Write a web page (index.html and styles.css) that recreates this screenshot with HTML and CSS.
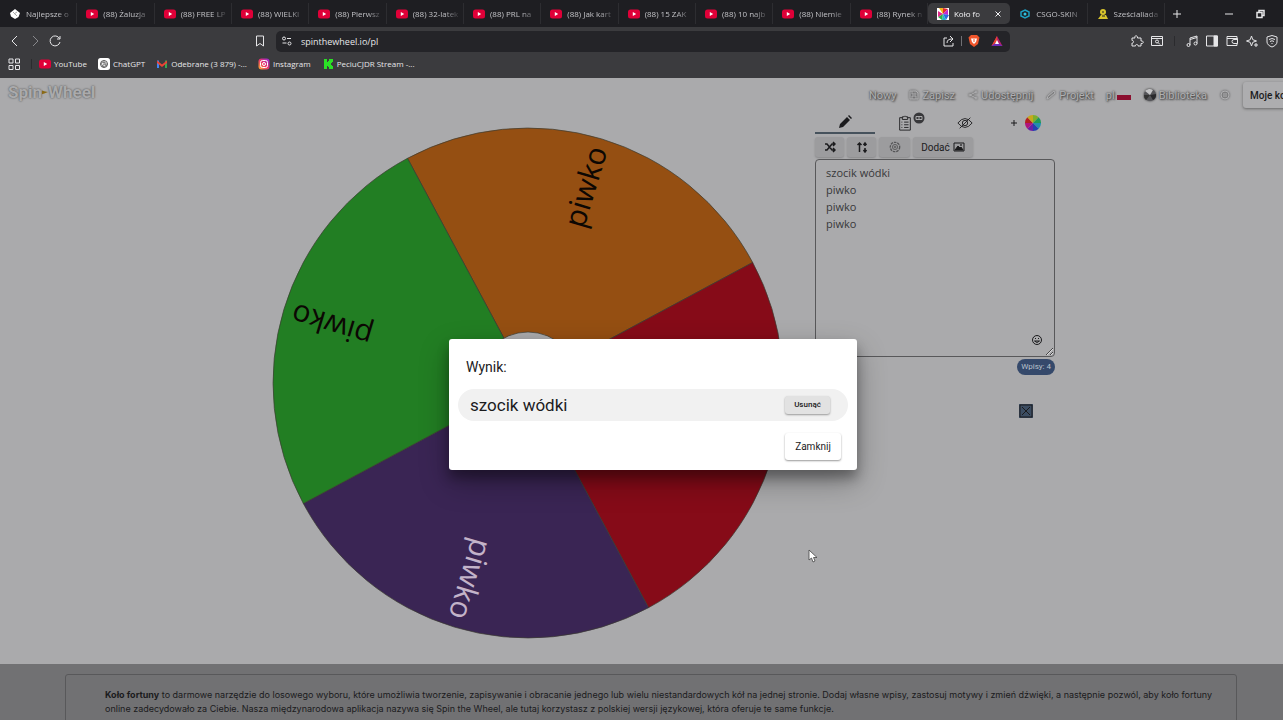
FILE: index.html
```
<!DOCTYPE html>
<html lang="pl">
<head>
    <meta charset="UTF-8">
    <meta name="viewport" content="width=device-width, initial-scale=1.0">
    <title>Koło fortuny</title>
    <link rel="stylesheet" href="styles.css">
</head>
<body>
    <svg class="symbols" aria-hidden="true">
        <symbol id="yt" viewBox="0 0 12 12">
            <rect x="0" y="1.5" width="12" height="9" rx="2.5" fill="#e00038"/>
            <path d="M4.8 4v4l3.4-2z" fill="#fff"/>
        </symbol>
        <symbol id="color-wheel" viewBox="0 0 16 16">
            <path d="M8 8V0a8 8 0 0 1 5.7 2.3z" fill="#7fae2b"/>
            <path d="M8 8l5.7-5.7A8 8 0 0 1 16 8z" fill="#1f9a55"/>
            <path d="M8 8h8a8 8 0 0 1-2.3 5.7z" fill="#1f8fae"/>
            <path d="M8 8l5.7 5.7A8 8 0 0 1 8 16z" fill="#2342b0"/>
            <path d="M8 8v8a8 8 0 0 1-5.7-2.3z" fill="#6a1fa5"/>
            <path d="M8 8l-5.7 5.7A8 8 0 0 1 0 8z" fill="#b0147c"/>
            <path d="M8 8H0a8 8 0 0 1 2.3-5.7z" fill="#b32020"/>
            <path d="M8 8L2.3 2.3A8 8 0 0 1 8 0z" fill="#c6a81b"/>
        </symbol>
    </svg>

    <div class="shell">
        <header class="browser">
            <div class="tab-strip">
                <div class="tabs">
                    <div class="tab"><svg viewBox="0 0 12 12"><path d="M6 1l5 4-1.500 4L6 11 2 8.500 1 5z" fill="#fff"/><path d="M4 4l4 4M8 4L5 6" stroke="#aaa"/></svg><span>Najlepsze o</span></div>
                    <div class="tab"><svg><use href="#yt"/></svg><span>(88) Żaluzja</span></div>
                    <div class="tab"><svg><use href="#yt"/></svg><span>(88) FREE LP</span></div>
                    <div class="tab"><svg><use href="#yt"/></svg><span>(88) WIELKI</span></div>
                    <div class="tab"><svg><use href="#yt"/></svg><span>(88) Pierwsz</span></div>
                    <div class="tab"><svg><use href="#yt"/></svg><span>(88) 32-latek</span></div>
                    <div class="tab"><svg><use href="#yt"/></svg><span>(88) PRL na</span></div>
                    <div class="tab"><svg><use href="#yt"/></svg><span>(88) Jak kart</span></div>
                    <div class="tab"><svg><use href="#yt"/></svg><span>(88) 15 ZAK</span></div>
                    <div class="tab"><svg><use href="#yt"/></svg><span>(88) 10 najb</span></div>
                    <div class="tab"><svg><use href="#yt"/></svg><span>(88) Niemie</span></div>
                    <div class="tab"><svg><use href="#yt"/></svg><span>(88) Rynek n</span></div>
                    <div class="tab active">
                        <svg viewBox="0 0 12 12"><path d="M0 0h12v12H0z" fill="#fff"/><path d="M6 6L2 0h4z" fill="#f0b51a"/><path d="M6 6V0l5 1z" fill="#e02b2b"/><path d="M6 6l5-5v6z" fill="#c22bd0"/><path d="M6 6l6 1-3 5z" fill="#2b6be0"/><path d="M6 6l3 6H5z" fill="#25b7c9"/><path d="M6 6l-1 6-4-3z" fill="#2bb04a"/><path d="M6 6L1 9V3z" fill="#e02b8c"/></svg>
                        <span>Koło fo</span>
                        <button class="tab-close" aria-label="Zamknij kartę"><svg viewBox="0 0 8 8"><path d="M1.500 1.500l5 5M6.500 1.500l-5 5"/></svg></button>
                    </div>
                    <div class="tab"><svg viewBox="0 0 12 12"><path d="M6 2l4 2v4l-4 2-4-2V4z" fill="none" stroke="#1f9fc0" stroke-width="1.500"/><circle cx="6" cy="6" r="1.500" fill="#2fc3e0"/></svg><span>CSGO-SKIN</span></div>
                    <div class="tab"><svg viewBox="0 0 12 12"><circle cx="6" cy="4" r="3" fill="#d8c42c"/><path d="M1 11l3-4h5l2 4z" fill="#d8c42c"/><path d="M5 4h2M5 8h3" stroke="#1e1e22"/></svg><span>Sześcialiada</span></div>
                </div>
                <button class="new-tab" aria-label="Nowa karta"><svg viewBox="0 0 12 12"><path d="M6 2v8M2 6h8"/></svg></button>
                <div class="window-buttons">
                    <button aria-label="Minimalizuj"><svg viewBox="0 0 12 12"><path d="M2 6h8"/></svg></button>
                    <button aria-label="Przywróć"><svg viewBox="0 0 12 12"><path d="M3 4.500h5v5H3zM5 4V2.500h5v5H8.500" stroke-width="1.500"/></svg></button>
                    <button aria-label="Zamknij"><svg viewBox="0 0 12 12"><path d="M3 3l6 6M9 3l-6 6"/></svg></button>
                </div>
            </div>

            <div class="toolbar">
                <div class="nav-buttons">
                    <button aria-label="Wstecz"><svg viewBox="0 0 14 14"><path d="M9 2L4 7l5 5"/></svg></button>
                    <button class="dim" aria-label="Dalej"><svg viewBox="0 0 14 14"><path d="M5 2l5 5-5 5"/></svg></button>
                    <button aria-label="Odśwież"><svg viewBox="0 0 14 14"><path d="M11.500 4.500A5 5 0 1 0 12 8M12 2v3H9"/></svg></button>
                </div>
                <button class="bookmark" aria-label="Dodaj zakładkę"><svg viewBox="0 0 14 14"><path d="M3.500 2h7v10L7 9.500 3.500 12z"/></svg></button>
                <div class="address">
                    <svg viewBox="0 0 14 14"><circle cx="4" cy="4.500" r="1.500"/><path d="M7 4.500h4M2.500 9h4"/><circle cx="9.500" cy="9.500" r="1.500"/></svg>
                    <input type="text" value="spinthewheel.io/pl" aria-label="Adres">
                    <svg viewBox="0 0 14 14"><path d="M5 4H2v8h9V9M5 9c0-3 2-4 5-4M8 2l3 3-3 3"/></svg>
                    <i class="divider"></i>
                    <svg class="brave" viewBox="0 0 14 14"><path d="M4 1h6l2.500 2.500L11 10l-4 3-4-3-1.500-6.500z" fill="#f0552b" stroke="none"/><path d="M4 4.500h6L9 8l-2 2-2-2z" fill="#fff" stroke="none"/><path d="M7 5v3" stroke="#f0552b"/></svg>
                    <svg class="bat" viewBox="0 0 14 14"><path d="M7 2l5.500 10h-11z" fill="#b81e6c" stroke="none"/><path d="M7 2v6l-5.500 4z" fill="#e8452c" stroke="none"/><path d="M1.500 12L7 8l5.500 4z" fill="#6b2bb5" stroke="none"/><path d="M7 6l2 4H5z" fill="#fff" stroke="none"/></svg>
                </div>
                <div class="extensions">
                    <svg viewBox="0 0 14 14"><path d="M2 4h3c-1-3 3-3 2.500 0H11v3c3-.5 3 3 0 2.500V12H8c.5-2-3-2-2.500 0H2V9c2 .5 2-3 0-2.500z"/></svg>
                    <svg viewBox="0 0 14 14"><path d="M1.500 2.500h11v9h-11zM2 4.500h10"/><circle cx="7" cy="7.500" r="1.500"/><path d="M8 8.500l2 2"/></svg>
                    <i class="divider"></i>
                    <svg viewBox="0 0 14 14"><path d="M5 11V4l7-2v7.500M5 5.500l7-2"/><circle cx="3.500" cy="11" r="1.500"/><circle cx="10.500" cy="9.500" r="1.500"/></svg>
                    <svg viewBox="0 0 14 14"><path d="M1.500 2h11v10h-11z"/><path d="M9 2h3.500v10H9z" fill="#e6e6e8"/></svg>
                    <svg viewBox="0 0 14 14"><path d="M12 5V2.500H2v9h10V9M2 4.500h10.500v5H9a2 2 0 0 1 0-4h3.500"/></svg>
                    <svg viewBox="0 0 14 14"><path d="M6.500 2l1.300 3.700L11.500 7 7.800 8.300 6.500 12 5.200 8.300 1.500 7l3.700-1.300zM11 9v4M9 11h4"/></svg>
                    <svg viewBox="0 0 14 14"><path d="M7 1.500L12 3v5c0 2-2 4-5 5-3-1-5-3-5-5V3z"/><path d="M4 5.500q3-2 6 0M5 7.500q2-1.500 4 0M7 9v1"/></svg>
                </div>
            </div>

            <nav class="bookmarks">
                <button aria-label="Grupy kart"><svg viewBox="0 0 12 12"><path d="M1 1h4v4H1zM7.500 1h4v4h-4zM1 7.500h4v4H1zM7.500 7.500h4v4h-4z"/></svg></button>
                <i class="divider"></i>
                <a href="#"><svg><use href="#yt"/></svg>YouTube</a>
                <a href="#"><svg viewBox="0 0 12 12"><rect width="12" height="12" rx="2.500" fill="#fff"/><g fill="none" stroke="#555"><circle cx="6" cy="6" r="3.500"/><path d="M4 4l4 1v3L5 8.500 3.500 6zM6 3v3l3 1.500M6 6L4 9" stroke-width=".7"/></g></svg>ChatGPT</a>
                <a href="#"><svg viewBox="0 0 12 12"><path d="M1 2.500h2v7.500H1z" fill="#4285f4"/><path d="M9 2.500h2v7.500H9z" fill="#34a853"/><path d="M1 2.500l5 4 5-4V5L6 9 1 5z" fill="#ea4335"/></svg>Odebrane (3 879) -...</a>
                <a href="#"><svg viewBox="0 0 12 12"><defs><linearGradient id="ig" x1="0" y1="1" x2="1" y2="0"><stop offset="0" stop-color="#ffb52b"/><stop offset=".5" stop-color="#e8306c"/><stop offset="1" stop-color="#8a2be0"/></linearGradient></defs><rect x=".5" y=".5" width="11" height="11" rx="3" fill="url(#ig)"/><g fill="none" stroke="#fff"><rect x="2.500" y="2.500" width="7" height="7" rx="2"/><circle cx="6" cy="6" r="1.500"/></g></svg>Instagram</a>
                <a href="#"><svg viewBox="0 0 12 12"><path d="M2 1h3v3h1V3h1V1h4v3h-1v1H9v2h1v1h1v3H7V9H6V8H5v3H2z" fill="#2be026"/></svg>PeciuCJDR Stream -...</a>
            </nav>
        </header>

        <div class="page">
            <header class="site-header">
                <a href="#" class="logo">Spin<svg viewBox="0 0 8 6"><path d="M0 1l3 1 5 1-5 2-3 1z" fill="#8a6a16"/></svg>Wheel</a>
                <nav class="site-nav">
                    <a href="#">Nowy</a>
                    <a href="#"><svg viewBox="0 0 12 12"><path d="M2 2h6l2 2v6H2zM4 2v3h4M4 10V7h4v3"/></svg>Zapisz</a>
                    <a href="#"><svg viewBox="0 0 12 12"><path d="M9 3L3 6l6 3"/><circle cx="9" cy="3" r="1"/><circle cx="3" cy="6" r="1"/><circle cx="9" cy="9" r="1"/></svg>Udostępnij</a>
                    <a href="#"><svg viewBox="0 0 12 12"><path d="M2 10l1-3 6-5 1 2-6 5z"/></svg>Projekt</a>
                    <a href="#">pl<i class="flag"></i></a>
                    <a href="#" class="library"><svg class="avatar" viewBox="0 0 14 14"><circle cx="7" cy="7" r="6" fill="#555559"/><path d="M7 7L2 3a6 6 0 0 1 8-1z" fill="#c4c4c6"/><path d="M7 7l6-1a6 6 0 0 1-3 6z" fill="#29292c"/><path d="M7 7L3 12a6 6 0 0 1-2-5z" fill="#333"/></svg>Biblioteka</a>
                    <a href="#" aria-label="Ustawienia"><svg viewBox="0 0 12 12"><circle cx="6" cy="6" r="4"/><path d="M4 5h4M4 7h4"/></svg></a>
                </nav>
                <button class="my-wheels">Moje koła</button>
            </header>

            <main class="content">
                <svg class="wheel" viewBox="0 0 510 510">
                    <g class="slices">
                        <path d="M255 255L134.500 30.300A255 255 0 0 1 479.700 134.500z" fill="#954f12"/>
                        <path d="M255 255L479.700 134.500A255 255 0 0 1 375.500 479.700z" fill="#860b18"/>
                        <path d="M255 255L375.500 479.700A255 255 0 0 1 30.300 375.500z" fill="#3a2554"/>
                        <path d="M255 255L30.300 375.500A255 255 0 0 1 134.500 30.300z" fill="#227e23"/>
                        <circle cx="255" cy="255" r="51" fill="#ababad"/>
                    </g>
                    <g class="labels" text-anchor="end">
                        <text x="501" y="264" transform="rotate(-73.200 255 255)">piwko</text>
                        <text x="501" y="264" transform="rotate(-163.200 255 255)">piwko</text>
                        <text x="501" y="264" transform="rotate(106.800 255 255)" class="light">piwko</text>
                    </g>
                </svg>

                <aside class="panel">
                    <div class="panel-tabs">
                        <button class="selected" aria-label="Wpisy"><svg viewBox="0 0 16 16"><path d="M2 14l1-4 7-7 3 3-7 7zM11 2l1-1 3 3-1 1z" fill="#1b1b1d"/></svg></button>
                        <button aria-label="Wyniki" class="results">
                            <svg viewBox="0 0 16 18"><path d="M5 3H2v14h12V3h-3M5 2h2q1-2 2 0h2v3H5zM7 8h5M7 11h5M7 14h5M4 8h1M4 11h1M4 14h1"/></svg>
                            <svg class="results-badge" viewBox="0 0 12 12"><circle cx="6" cy="6" r="5.500" fill="#38383b" stroke="none"/><path d="M3 4.500h6v3H3zM5 6h2" stroke="#aaaaac"/></svg>
                        </button>
                        <button aria-label="Ukryj"><svg viewBox="0 0 18 16"><path d="M1 8q8-10 16 0-8 10-16 0zM3 14L15 2"/><circle cx="9" cy="8" r="3"/></svg></button>
                        <button aria-label="Dodaj koło" class="add-wheel"><svg class="plus" viewBox="0 0 8 8"><path d="M4 1v6M1 4h6"/></svg><svg><use href="#color-wheel"/></svg></button>
                    </div>
                    <div class="panel-tools">
                        <button aria-label="Tasuj"><svg viewBox="0 0 12 12"><path d="M1 3h2l5 6h3M1 9h2l5-6h3M9 1l2 2-2 2M9 7l2 2-2 2" stroke-width="1.500"/></svg></button>
                        <button aria-label="Sortuj"><svg viewBox="0 0 12 12"><path d="M3.500 11V2M1.500 4l2-2 2 2M9 2v3M9 7v4M7.500 4L9 2l1.500 2M7.500 9L9 11l1.500-2" stroke-width="1.500"/></svg></button>
                        <button class="gear" aria-label="Opcje"><svg viewBox="0 0 14 14"><circle cx="7" cy="7" r="5.500" stroke-width="1.500" stroke-dasharray="3 1"/><circle cx="7" cy="7" r="3"/><circle cx="7" cy="7" r="1"/></svg></button>
                        <button class="add">Dodać<svg viewBox="0 0 12 12"><path d="M1 2h10v8H1z"/><path d="M2 9l3-4 2 2 1-1 2 3z" fill="#1b1b1d"/><circle cx="8" cy="4" r=".5"/></svg></button>
                    </div>
                    <div class="entries">
                        <textarea aria-label="Wpisy" spellcheck="false">szocik wódki
piwko
piwko
piwko</textarea>
                        <button class="emoji" aria-label="Emoji"><svg viewBox="0 0 12 12"><circle cx="6" cy="6" r="4.500"/><path d="M3.500 7q2.500 3 5 0zM4 4.500h1M7 4.500h1"/></svg></button>
                    </div>
                    <span class="count">Wpisy: 4</span>
                    <button class="clear" aria-label="Wyczyść"><svg viewBox="0 0 14 14"><path d="M3 3l8 8M11 3l-8 8M1 1h12v12H1z"/></svg></button>
                </aside>
            </main>

            <footer class="about">
                <div class="about-card">
                    <p><b>Koło fortuny</b> to darmowe narzędzie do losowego wyboru, które umożliwia tworzenie, zapisywanie i obracanie jednego lub wielu niestandardowych kół na jednej stronie. Dodaj własne wpisy, zastosuj motywy i zmień dźwięki, a następnie pozwól, aby koło fortuny online zadecydowało za Ciebie. Nasza międzynarodowa aplikacja nazywa się Spin the Wheel, ale tutaj korzystasz z polskiej wersji językowej, która oferuje te same funkcje.</p>
                </div>
            </footer>

            <div class="overlay">
                <div class="dialog" role="dialog" aria-labelledby="result-title">
                    <h2 id="result-title">Wynik:</h2>
                    <div class="result">
                        <span>szocik wódki</span>
                        <button class="remove">Usunąć</button>
                    </div>
                    <button class="close">Zamknij</button>
                </div>
            </div>

            <svg class="cursor" viewBox="0 0 10 14"><path d="M1 1v10l2.500-2 1.500 4 2-1-1.500-3.500H9z" fill="#fff" stroke="#444" stroke-width=".8"/></svg>
        </div>
    </div>
</body>
</html>
```
FILE: styles.css
```
* {
    margin: 0;
    padding: 0;
    box-sizing: border-box;
}

body {
    font-family: Roboto, sans-serif;
    background: #aaaaac;
    color: #1b1b1d;
    overflow: hidden;
}

/* the window runs a little past the right edge of the screen */
.shell {
    width: calc(100% + 23px);
    height: 100vh;
    display: flex;
    flex-direction: column;
}

button {
    border: none;
    background: none;
    font-family: inherit;
    color: inherit;
    display: flex;
    align-items: center;
    justify-content: center;
    cursor: pointer;
}

a {
    color: inherit;
    text-decoration: none;
}

svg {
    fill: none;
    stroke: currentColor;
    flex-shrink: 0;
}

.symbols {
    position: absolute;
    width: 0;
    height: 0;
}

symbol,
.tab > svg,
.bookmarks a svg {
    stroke: none;
}

/* Browser */
.browser {
    background: #3b3b3e;
    color: #e6e6e8;
    font-family: "Open Sans", sans-serif;
    font-size: 8px;
    font-weight: 500;
}

.tab-strip {
    height: 27px;
    background: #1e1e22;
    display: flex;
    align-items: center;
}

.tabs {
    flex: 1;
    min-width: 0;
    display: flex;
    align-items: center;
}

.tab {
    flex: 1 1 0;
    min-width: 0;
    height: 21px;
    padding: 0 2px 0 9px;
    display: flex;
    align-items: center;
    gap: 5px;
    color: #c2c2c6;
    border-right: 1px solid #2d2d31;
}

.tab > svg {
    width: 12px;
    height: 12px;
}

.tab span {
    flex: 1;
    min-width: 0;
    overflow: hidden;
    white-space: nowrap;
    mask-image: linear-gradient(to right, #000 65%, transparent);
}

.tab.active {
    padding: 0 8px 0 9px;
    border: none;
    border-radius: 5px;
    background: #3b3b3e;
    color: #f2f2f4;
}

.tab-close svg {
    width: 8px;
    height: 8px;
}

.new-tab {
    width: 24px;
}

.new-tab svg,
.window-buttons svg {
    width: 12px;
    height: 12px;
}

.window-buttons {
    display: flex;
    margin-left: 24px;
}

.window-buttons button {
    width: 31px;
}

.toolbar {
    height: 28px;
    display: flex;
    align-items: center;
}

.toolbar svg {
    width: 14px;
    height: 14px;
}

.nav-buttons {
    display: flex;
    gap: 6px;
    padding-left: 8px;
    width: 253px;
}

.dim {
    color: #88888c;
}

.address {
    flex: 1;
    height: 21px;
    margin-left: 9px;
    padding: 0 6px 0 4px;
    border-radius: 5px;
    background: #242428;
    display: flex;
    align-items: center;
    gap: 5px;
}

.address input {
    flex: 1;
    padding-left: 2px;
    border: none;
    outline: none;
    background: none;
    color: #e6e6e8;
    font: inherit;
    font-size: 9px;
}

.address .bat {
    margin-left: 4px;
}

.divider {
    width: 1px;
    height: 10px;
    background: #707074;
}

.extensions {
    width: 296px;
    padding-right: 27px;
    display: flex;
    justify-content: flex-end;
    align-items: center;
    gap: 6px;
}

.extensions .divider,
.bookmarks .divider {
    background: #2b2b2e;
}

.extensions .divider {
    margin: 0 4px;
}

.bookmarks {
    height: 23px;
    padding: 0 8px 6px;
    display: flex;
    align-items: center;
    gap: 11px;
}

.bookmarks svg {
    width: 12px;
    height: 12px;
}

.bookmarks .divider {
    margin-right: -4px;
}

.bookmarks a {
    display: flex;
    align-items: center;
    gap: 3px;
}

/* Page */
.page {
    flex: 1;
    min-height: 0;
    position: relative;
    display: flex;
    flex-direction: column;
}

.site-header {
    height: 34px;
    display: flex;
    align-items: center;
    justify-content: flex-end;
}

.logo {
    margin: 0 auto 6px 8px;
    font-size: 17px;
    font-weight: 700;
    color: #aaaaac;
    text-shadow: 0 0 2px #444;
    display: flex;
    align-items: center;
}

.logo svg {
    width: 6px;
    height: 6px;
    stroke: none;
}

.site-nav {
    display: flex;
    align-items: center;
    gap: 12px;
    font-size: 11px;
    color: #b0b0b2;
    text-shadow: 0 0 2px #333, 1px 1px 2px #444;
}

.site-nav a {
    display: flex;
    align-items: center;
    gap: 2px;
}

.site-nav svg {
    width: 12px;
    height: 12px;
    filter: drop-shadow(0 0 1px #333);
}

.site-nav .avatar {
    width: 14px;
    height: 14px;
    stroke: none;
}

.flag {
    width: 14px;
    height: 10px;
    background: linear-gradient(#ababad 50%, #8b0f2f 50%);
}

.my-wheels {
    width: 63px;
    height: 26px;
    margin-left: 12px;
    padding-left: 7px;
    border-radius: 3px;
    background: #adadaf;
    box-shadow: 0 1px 3px #666;
    font-size: 10px;
    font-weight: 500;
    justify-content: flex-start;
    white-space: nowrap;
}

.content {
    flex: 1;
    padding-left: 22px;
    display: flex;
    justify-content: center;
    gap: 32px;
}

.wheel {
    width: 510px;
    height: 510px;
    margin-top: 16px;
    overflow: visible;
}

.slices {
    stroke: #3a3a30;
    stroke-opacity: 0.7;
}

.labels {
    font-family: "Open Sans", sans-serif;
    font-size: 30px;
    font-weight: 500;
    fill: #0c0703;
    stroke: none;
}

.labels .light {
    fill: #c3b3c9;
}

.panel {
    width: 240px;
    display: flex;
    flex-direction: column;
}

.panel-tabs {
    display: grid;
    grid-template-columns: repeat(4, 1fr);
    height: 22px;
}

.panel-tabs svg {
    width: 16px;
    height: 16px;
}

.panel-tabs .selected {
    border-bottom: 2px solid #46525c;
}

.panel-tabs .selected svg {
    stroke: none;
}

.results {
    position: relative;
}

.panel-tabs .results-badge {
    position: absolute;
    top: 0;
    right: 10px;
    width: 12px;
    height: 12px;
}

.add-wheel {
    gap: 7px;
}

.panel-tabs .plus {
    width: 8px;
    height: 8px;
}

.panel-tools {
    display: flex;
    gap: 3px;
    padding: 3px 0 2px;
}

.panel-tools button {
    width: 29px;
    height: 20px;
    border-radius: 3px;
    background: #9c9c9e;
    box-shadow: 0 1px 2px #88888a;
}

.panel-tools .gear {
    width: 31px;
    color: #555557;
}

.panel-tools .add {
    width: 60px;
    gap: 3px;
    font-size: 10px;
}

.panel-tools svg {
    width: 12px;
    height: 12px;
}

.entries {
    position: relative;
    height: 198px;
}

.entries textarea {
    width: 100%;
    height: 100%;
    padding: 4px 10px;
    border: 1px solid #58585a;
    border-radius: 4px;
    outline: none;
    background: transparent;
    color: #38383a;
    font-family: "Open Sans", sans-serif;
    font-size: 11px;
    line-height: 17px;
    display: block;
}

.emoji {
    position: absolute;
    right: 12px;
    bottom: 11px;
}

.emoji svg {
    width: 12px;
    height: 12px;
}

.count {
    align-self: flex-end;
    margin-top: 2px;
    padding: 0 4px;
    border-radius: 8px;
    background: #35496b;
    color: #b9c1cc;
    font-size: 8px;
    line-height: 16px;
}

.clear {
    align-self: flex-end;
    margin: 29px 22px 0 0;
    background: #3c4d62;
}

.clear svg {
    width: 14px;
    height: 14px;
}

.about {
    height: 56px;
    padding: 10px 69px 0 65px;
    background: #717173;
}

.about-card {
    height: 60px;
    padding: 13px 18px 0 39px;
    border: 1px solid #58585a;
    border-radius: 3px;
    font-family: Inter, sans-serif;
    font-size: 9px;
    line-height: 14px;
}

/* Result dialog */
.overlay {
    position: absolute;
    inset: 0 0 -10px;
    display: flex;
    align-items: center;
    justify-content: center;
}

.dialog {
    width: 408px;
    padding: 18px 9px 10px;
    border-radius: 3px;
    background: #fff;
    box-shadow: 0 8px 12px rgba(0, 0, 0, 0.3), 0 12px 30px rgba(0, 0, 0, 0.3);
}

.dialog h2 {
    padding-left: 8px;
    font-size: 14px;
    font-weight: 400;
    line-height: 20px;
}

.result {
    height: 32px;
    margin: 12px 0;
    padding: 0 18px 0 12px;
    border-radius: 16px;
    background: #f1f1f1;
    display: flex;
    align-items: center;
    justify-content: space-between;
    font-size: 17px;
}

.remove {
    width: 45px;
    height: 18px;
    border-radius: 3px;
    background: #e2e2e2;
    box-shadow: 0 1px 2px #999;
    font-size: 8px;
    font-weight: 500;
}

.close {
    width: 56px;
    height: 27px;
    margin: 0 7px 0 auto;
    border-radius: 3px;
    background: #fff;
    box-shadow: 0 1px 2px #999;
    font-size: 10px;
}

.cursor {
    position: absolute;
    left: 808px;
    top: 471px;
    width: 10px;
    height: 14px;
}
```
